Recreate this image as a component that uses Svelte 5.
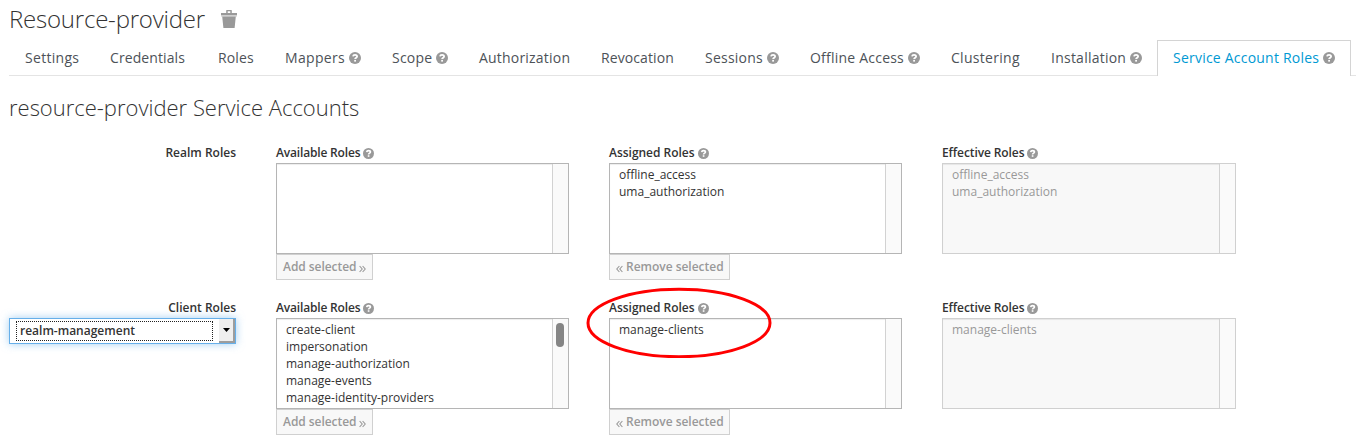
<script>
  const tabs = [
    { label: 'Settings', w: 85, ls: 0.3 },
    { label: 'Credentials', w: 108, ls: 0.1 },
    { label: 'Roles', w: 67, ls: 0.15 },
    { label: 'Mappers', w: 107, help: true, ls: 0.33 },
    { label: 'Scope', w: 87, help: true, ls: 0.2 },
    { label: 'Authorization', w: 122, ls: 0.2 },
    { label: 'Revocation', w: 104, ls: 0.1 },
    { label: 'Sessions', w: 105, help: true },
    { label: 'Offline Access', w: 141, help: true, ls: 0.22 },
    { label: 'Clustering', w: 100, ls: 0.3 },
    { label: 'Installation', w: 122, help: true },
    { label: 'Service Account Roles', w: 194, help: true, active: true, ls: 0.22 }
  ];
  const rows = [
    {
      title: 'Realm Roles',
      lists: [
        { title: 'Available Roles', ls: -0.17, items: [], action: 'add' },
        { title: 'Assigned Roles', ls: -0.02, items: ['offline_access', 'uma_authorization'], action: 'remove' },
        { title: 'Effective Roles', ls: -0.1, items: ['offline_access', 'uma_authorization'], disabled: true }
      ]
    },
    {
      title: 'Client Roles',
      select: 'realm-management',
      lists: [
        {
          title: 'Available Roles',
          ls: -0.17,
          items: ['create-client', 'impersonation', 'manage-authorization', 'manage-events', 'manage-identity-providers'],
          action: 'add',
          thumb: true
        },
        { title: 'Assigned Roles', ls: -0.02, items: ['manage-clients'], action: 'remove', marked: true },
        { title: 'Effective Roles', ls: -0.1, items: ['manage-clients'], disabled: true }
      ]
    }
  ];
</script>

{#snippet help(size)}
  <svg class="help" width={size} height={size} viewBox="0 0 12 12">
    <circle cx="6" cy="6" r="6" fill="#999" />
    <path d="M4 4.4C4.2 3.2 4.9 2.8 6 2.8c1.3 0 2.1.65 2.1 1.6C8.1 5.7 6.1 5.6 6.1 7.1" fill="none" stroke="#fff" stroke-width="1.8" />
    <rect x="5.2" y="7.9" width="1.8" height="1.7" fill="#fff" />
  </svg>
{/snippet}

{#snippet chevrons(left)}
  <svg class="chev" width="7" height="8" viewBox="0 0 7 8">
    <path d={left ? 'M3.4 1 .8 4l2.6 3M6.4 1 3.8 4l2.6 3' : 'M.6 1l2.6 3L.6 7M3.6 1l2.6 3-2.6 3'} fill="none" stroke="#999" stroke-width="1.1" />
  </svg>
{/snippet}

<main>
  <h1>
    <span>Resource-provider</span>
    <svg width="16" height="18" viewBox="0 0 16 18">
      <path d="M5.2 3V.4Q5.2 0 5.6 0h4.8q.4 0 .4.4V3H16v2.6H0V3zM6.7 1.3V3h2.6V1.3z" fill="#999" fill-rule="evenodd" />
      <path d="M0 5h16v1.6H0z" fill="#d0d0d0" />
      <path d="M1.2 6.6h13.6L13.6 18H2.4z" fill="#999" />
    </svg>
  </h1>
  <nav>
    {#each tabs as tab}
      <a class:active={tab.active} style:width="{tab.w}px">
        <span style:letter-spacing="{tab.ls ?? 0.24}px">{tab.label}</span>{#if tab.help}{@render help(12)}{/if}
      </a>
    {/each}
  </nav>
  <h2>resource-provider Service Accounts</h2>
  {#each rows as row}
    <section>
      <div class="side">
        <div class="title">{row.title}</div>
        {#if row.select}
          <div class="select">
            <span class="value">{row.select}</span>
            <span class="drop"><svg width="7" height="4" viewBox="0 0 7 4"><path d="M0 0h7L3.5 4z" fill="#000" /></svg></span>
          </div>
        {/if}
      </div>
      {#each row.lists as list}
        <div class="col">
          <div class="title"><span style:letter-spacing="{list.ls}px">{list.title}</span>{@render help(11)}</div>
          <div class="box" class:disabled={list.disabled}>
            <ul>
              {#each list.items as item}<li>{item}</li>{/each}
            </ul>
            <div class="track">{#if list.thumb}<i></i>{/if}</div>
          </div>
          {#if list.action === 'add'}
            <button disabled>Add selected{@render chevrons(false)}</button>
          {:else if list.action === 'remove'}
            <button class="remove" disabled>{@render chevrons(true)}Remove selected</button>
          {/if}
          {#if list.marked}
            <svg class="mark" width="186" height="72" viewBox="0 0 186 72"><ellipse cx="93" cy="37" rx="91" ry="33.7" fill="none" stroke="#f00" stroke-width="3" /></svg>
          {/if}
        </div>
      {/each}
    </section>
  {/each}
</main>

<style>
  :global(body) { background: #fff; overflow: hidden; }
  main {
    box-sizing: border-box;
    height: 445px;
    padding-left: 9px;
    font: 12px/17px 'Open Sans', sans-serif;
    color: #333;
    overflow: hidden;
  }
  h1 { display: flex; gap: 16px; margin: 0; height: 40px; font-size: 24px; line-height: 37px; font-weight: 300; letter-spacing: -.21px; }
  h1 svg { margin-top: 10px; }
  nav { display: flex; box-sizing: border-box; height: 36px; border-bottom: 1px solid #e4e4e4; }
  nav a {
    box-sizing: border-box;
    flex: none;
    display: flex;
    gap: 4px;
    height: 36px;
    padding: 1px 0 0 16px;
    font-size: 14px;
    line-height: 34px;
    color: #4d5258;
    white-space: nowrap;
  }
  nav .help { margin-top: 11px; }
  nav a.active { padding: 0 0 0 15px; border: 1px solid #d4d4d4; border-bottom: 0; background: #fff; color: #0099d3; }
  h2 { margin: 0; height: 68px; font-size: 22px; line-height: 63px; font-weight: 300; letter-spacing: -.01px; }
  section { display: grid; grid-template-columns: 227px 293px 293px 294px; column-gap: 40px; height: 155px; }
  .title { display: flex; height: 19px; line-height: 18px; font-weight: 600; white-space: nowrap; }
  .side .title { justify-content: flex-end; }
  .title .help { margin: 4px 0 0 3px; }
  .col { position: relative; }
  .box { display: flex; box-sizing: border-box; height: 91px; border: 1px solid #b5b5b5; box-shadow: inset 0 1px 1px rgba(0, 0, 0, .075); }
  ul { flex: 1; margin: 0; padding: 2px 0 0 9px; list-style: none; overflow: hidden; }
  li { height: 17px; }
  .track { box-sizing: border-box; width: 16px; border-left: 1px solid #d2d2d2; background: #fafafa; padding: 4px 0 0 3px; }
  .track i { display: block; width: 8px; height: 24px; border-radius: 4px; background: #858585; }
  .disabled { border-color: #d0d0d0; background: #f8f8f8; color: #999; }
  button {
    display: flex;
    align-items: center;
    box-sizing: border-box;
    width: 97px;
    height: 26px;
    padding: 0 6px;
    border: 1px solid #d0d0d0;
    background: #f8f8f8;
    font: 600 12px/24px 'Open Sans', sans-serif;
    letter-spacing: -.05px;
    color: #999;
    gap: 2.5px;
    white-space: nowrap;
  }
  button.remove { width: 121px; gap: 3px; letter-spacing: -.02px; }
  .chev { margin-top: 3px; flex: none; }
  .select {
    display: flex;
    box-sizing: border-box;
    height: 26px;
    border: 1px solid #66afe9;
    box-shadow: 0 0 8px rgba(102, 175, 233, .6);
    background: #fff;
    padding: 2px 0 0 6px;
    font-weight: 600;
  }
  .value { box-sizing: border-box; width: 197px; height: 20px; border: 1px dotted #222; padding-left: 3px; line-height: 17px; }
  .drop {
    box-sizing: border-box;
    display: flex;
    align-items: center;
    justify-content: center;
    margin: -2px 0 0 6px;
    width: 16px;
    height: 24px;
    border: solid #9d9d9d;
    border-width: 0 2px 2px 0;
    background: #efefef;
  }
  .mark { position: absolute; left: -23px; top: -13px; z-index: 1; }
</style>
